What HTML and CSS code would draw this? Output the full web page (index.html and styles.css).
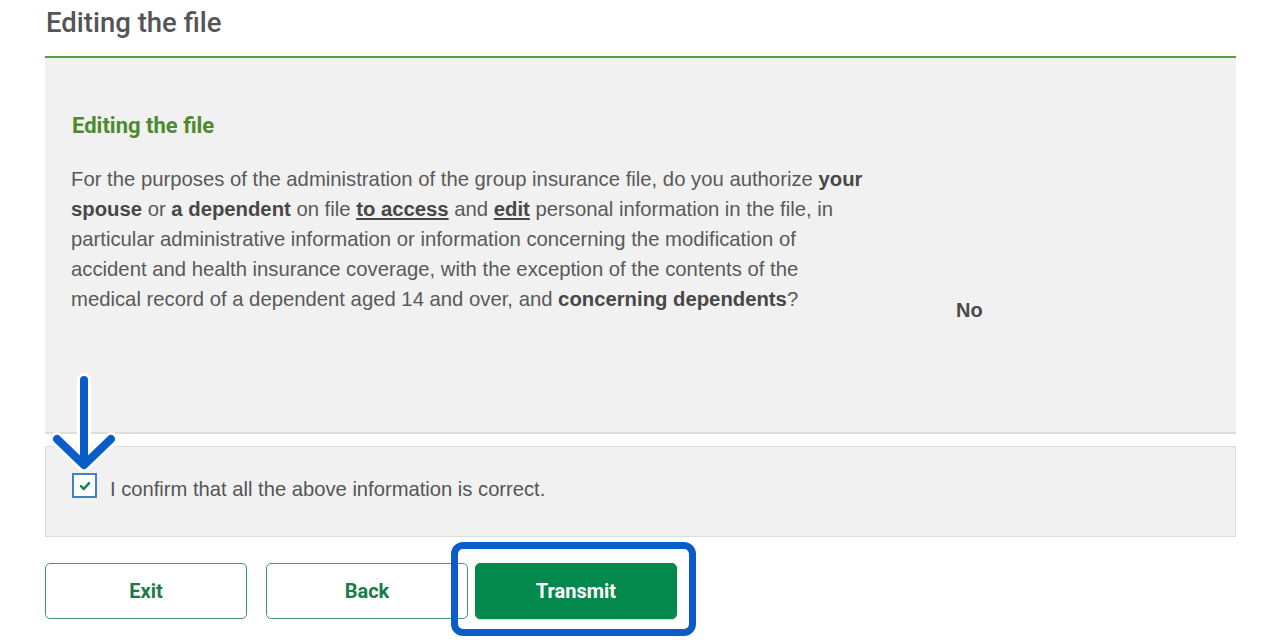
FILE: index.html
```html
<!DOCTYPE html>
<html lang="en">
<head>
<meta charset="utf-8">
<title>Editing the file</title>
<link rel="stylesheet" href="styles.css">
</head>
<body>
<div class="page">
  <h1 class="page-title">Editing the file</h1>

  <section class="panel">
    <h2 class="section-title">Editing the file</h2>
    <div class="row">
      <p class="question">For the purposes of the administration of the group insurance file, do you authorize <strong>your spouse</strong> or <strong>a dependent</strong> on file <strong class="ul">to access</strong> and <strong class="ul">edit</strong> personal information in the file, in particular administrative information or information concerning the modification of accident and health insurance coverage, with the exception of the contents of the medical record of a dependent aged 14 and over, and <strong>concerning dependents</strong>?</p>
      <div class="answer">No</div>
    </div>
  </section>

  <div class="confirm">
    <label class="check">
      <span class="box">
        <svg viewBox="0 0 12 12" width="12" height="12" aria-hidden="true"><path d="M2 6.2 L4.8 9 L10 3.2" fill="none" stroke="#0b8a4a" stroke-width="2.6" stroke-linecap="round" stroke-linejoin="round"/></svg>
      </span>
      <span class="check-text">I confirm that all the above information is correct.</span>
    </label>
  </div>

  <div class="actions">
    <button class="btn btn-outline">Exit</button>
    <button class="btn btn-outline btn-back">Back</button>
    <button class="btn btn-primary">Transmit</button>
    <span class="highlight"></span>
  </div>

  <svg class="arrow" viewBox="0 0 70 102" width="70" height="102" aria-hidden="true">
    <g fill="none" stroke-linecap="round" stroke-linejoin="round">
      <path d="M34 8 V90 M7 67 L34 93 L61 67" stroke="#ffffff" stroke-width="14"/>
      <path d="M34 8 V90 M7 67 L34 93 L61 67" stroke="#0a5dc8" stroke-width="8"/>
    </g>
  </svg>
</div>
</body>
</html>
```

FILE: styles.css
```css
* { box-sizing: border-box; }

html, body {
  margin: 0;
  padding: 0;
  background: #ffffff;
}

body {
  font-family: "Liberation Sans", Arial, sans-serif;
  color: #555555;
}

.page {
  position: relative;
  width: 1280px;
  min-height: 640px;
  padding: 0 44px 0 45px;
}

.page-title {
  margin: 6px 0 16px 1px;
  font-family: Roboto, "Liberation Sans", sans-serif;
  font-size: 27.5px;
  line-height: 34px;
  font-weight: 500;
  color: #555555;
}

.panel {
  background: #f1f1f1;
  border-top: 2px solid #5c9a43;
  border-bottom: 2px solid #dedede;
  padding: 54px 26px 107px 26px;
}

.section-title {
  margin: 0 0 24px 1px;
  font-family: Roboto, "Liberation Sans", sans-serif;
  font-size: 22px;
  line-height: 28px;
  font-weight: 700;
  color: #4b8b2d;
}

.row {
  display: flex;
  align-items: flex-start;
}

.question {
  margin: 0;
  width: 796px;
  flex: none;
  font-size: 20.3px;
  line-height: 30px;
  color: #595959;
}

.question strong {
  font-weight: 700;
  color: #474747;
}

.question .ul {
  text-decoration: underline;
}

.answer {
  margin: 131px 0 0 89px;
  font-size: 20px;
  line-height: 30px;
  font-weight: 700;
  color: #4a4a4a;
}

.confirm {
  margin-top: 12px;
  height: 91px;
  background: #f1f1f1;
  border: 1px solid #dcdcdc;
  padding: 26px 26px 0 26px;
}

.check {
  display: flex;
  align-items: flex-start;
  gap: 13px;
}

.box {
  width: 25px;
  height: 25px;
  flex: none;
  background: #ffffff;
  border: 2px solid #4282c2;
  display: flex;
  align-items: center;
  justify-content: center;
}

.check-text {
  font-size: 20.2px;
  line-height: 25px;
  padding-top: 4px;
  color: #555555;
}

.actions {
  position: relative;
  margin-top: 26px;
  display: flex;
  align-items: center;
}

.btn {
  width: 202px;
  height: 56px;
  border-radius: 5px;
  font-family: Roboto, "Liberation Sans", sans-serif;
  font-size: 20px;
  font-weight: 700;
  cursor: pointer;
}

.btn-outline {
  background: #ffffff;
  border: 1px solid #3f9a6c;
  color: #1b7b48;
}

.btn-back {
  margin-left: 19px;
}

.btn-primary {
  margin-left: 7px;
  background: #03894b;
  border: 1px solid #03894b;
  color: #ffffff;
  box-shadow: 0 1px 2px rgba(0,0,0,0.2);
}

.highlight {
  position: absolute;
  left: 406px;
  top: -21px;
  width: 245px;
  height: 94px;
  border: 7px solid #0a5dc8;
  border-radius: 12px;
  pointer-events: none;
}

.arrow {
  position: absolute;
  left: 50px;
  top: 366px;
}
```
